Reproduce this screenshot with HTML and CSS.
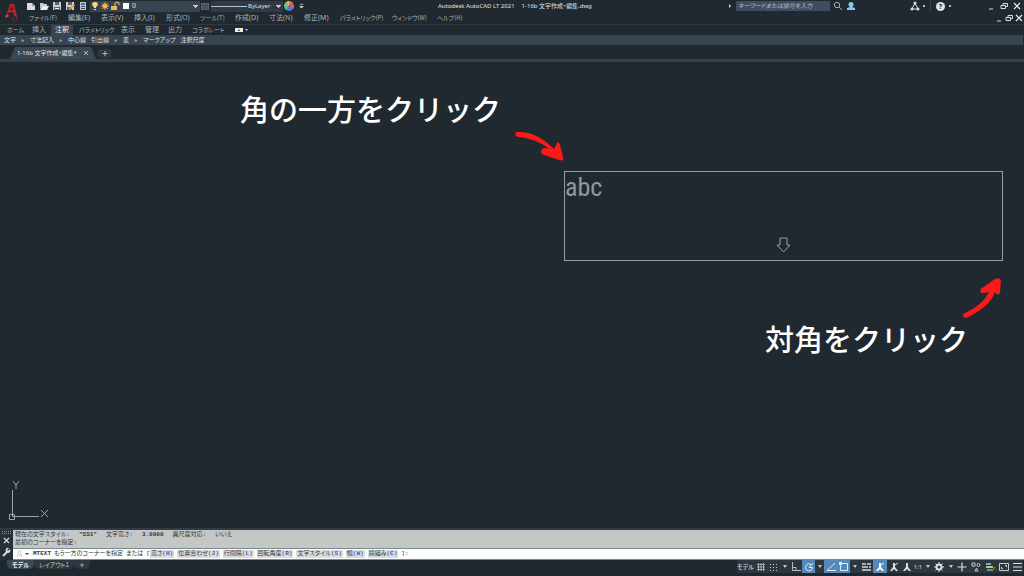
FILE: index.html
```html
<!DOCTYPE html>
<html lang="ja">
<head>
<meta charset="utf-8">
<title>Autodesk AutoCAD LT 2021</title>
<link rel="stylesheet" href="styles.css">
</head>
<body>
<div class="app">
  <header class="head">
    <button class="logo" aria-label="アプリケーション メニュー"><svg width="15" height="20" viewBox="0 0 15 20"><path d="M2 14 6 2h4l3 12h-3l-1-4-5 1-1 4z" fill="#b9222b"/><path d="M6 8 8 4l1 4z" fill="#3c1e25"/><path d="m1 14 3-2 1 2-3 2z" fill="#e03a3c"/><path d="M9 15v3h2M11 15h3M12.500 15v3" stroke="#a3212b" fill="none"/></svg></button>
    <div class="head-rows">
      <div class="titlebar">
        <div class="quick">
          <button aria-label="新規"><svg viewBox="0 0 10 10"><path d="M1 2h5l3 3v4H1z" fill="#ddd"/><path d="M6 2v3h3" fill="#999"/></svg></button>
          <button aria-label="開く"><svg viewBox="0 0 10 10"><path d="M1 8V2h3l1 1h3v2H3z" fill="#ccc"/><path d="m3 5h7L8 9H1z" fill="#eee"/></svg></button>
          <button aria-label="保存"><svg viewBox="0 0 10 10"><path d="M1 1h8v8H1z" fill="#ccc"/><path d="M3 1h4v3H3zM2 6h6v3H2z" fill="#59636b"/><path d="M3 7h4v1H3z" fill="#eee"/></svg></button>
          <button aria-label="名前を付けて保存"><svg viewBox="0 0 10 10"><path d="M1 1h8v8H1z" fill="#ccc"/><path d="M3 1h4v3H3zM2 6h5v3H2z" fill="#59636b"/><path d="m4 9 1-3 4-3 1 1-4 4z" fill="#e4a344"/></svg></button>
          <button aria-label="印刷"><svg viewBox="0 0 10 10"><path d="M2 1h6v8H2z" fill="#bcc7cf"/><path d="M3 2h4v2H3z" fill="#3e79a6"/><path d="M3 5.500h4M3 7.500h4" stroke="#47535c"/></svg></button>
        </div>
        <div class="layer">
          <svg viewBox="0 0 10 10"><path d="M5 1C1 1 2 5 4 6v1h2V6c2-1 3-5-1-5" fill="#ffdc80"/><path d="M4 8h2v1H4z" fill="#ddd"/></svg>
          <svg viewBox="0 0 10 10"><path d="M5 1v8M1 5h8M2 2l6 6M8 2l-6 6" stroke="#d69b3d"/><circle cx="5" cy="5" r="2.500" fill="#f7b64a"/></svg>
          <svg viewBox="0 0 10 10"><path d="M1 5h6v4H1z" fill="#f0b94f"/><path d="M5 5V2q2-2 4 0v2" fill="none" stroke="#f4d489"/></svg>
          <svg viewBox="0 0 10 10"><path d="M3 2h6v6H3z" fill="#fff"/></svg>
          <select aria-label="画層"><option>0</option></select>
        </div>
        <svg class="grid-icon" viewBox="0 0 10 10"><path d="M1 2h8v7H1z" fill="#68737c"/><path d="M1 4.500h8M1 7h8M3 2v7M5 2v7M7 2v7" stroke="#29343b" stroke-width=".6"/></svg>
        <div class="linetype"><span class="line"></span><select aria-label="線種"><option>ByLayer</option></select></div>
        <button class="wheel" aria-label="色"><svg viewBox="0 0 10 10"><path d="M5 5V0a5 5 0 0 1 4.500 3z" fill="#e6684f"/><path d="M5 5 9.500 3A5 5 0 0 1 8 9z" fill="#bf5bc0"/><path d="m5 5 3 4a5 5 0 0 1-5 .5z" fill="#4f7edb"/><path d="M5 5 3 9.500A5 5 0 0 1 0 5z" fill="#42bfb0"/><path d="M5 5H0a5 5 0 0 1 2-4z" fill="#8bcb55"/><path d="M5 5 2 1a5 5 0 0 1 3-1z" fill="#f4c043"/></svg></button>
        <button class="more" aria-label="カスタマイズ"><svg viewBox="0 0 6 8"><path d="M1 2h4" stroke="#ccc"/><path d="M0 4h6L3 7z" fill="#ccc"/></svg></button>
        <div class="title"><span>Autodesk AutoCAD LT 2021</span><span>1-16b 文字作成・編集.dwg</span></div>
        <div class="help">
          <svg class="s4" viewBox="0 0 4 8"><path d="m1 2 2 2-2 2z" fill="#ddd"/></svg>
          <input class="search" type="text" aria-label="検索" placeholder="キーワードまたは語句を入力">
          <button class="find" aria-label="検索する"><svg viewBox="0 0 10 10"><circle cx="4" cy="4" r="2.700" fill="none" stroke="#aaa"/><path d="m6 6 3 3" stroke="#aaa"/></svg></button>
          <button class="user" aria-label="サインイン"><svg viewBox="0 0 10 10"><circle cx="5" cy="3.500" r="2.500" fill="#88c9f0"/><path d="M4 4h2v2l3 1v2H1V7l3-1z" fill="#88c9f0"/></svg></button>
          <button class="store" aria-label="アプリ"><svg viewBox="0 0 10 10"><path d="M5 2 2 8h6z" fill="none" stroke="#ddd"/><circle cx="5" cy="2" r="1.500" fill="#ddd"/><circle cx="2" cy="8" r="1.500" fill="#ddd"/><circle cx="8" cy="8" r="1.500" fill="#ddd"/></svg><i class="dot"></i></button>
          <button class="question" aria-label="ヘルプ"><b>?</b><i class="dot"></i></button>
          <div class="win">
            <button aria-label="最小化"><svg viewBox="0 0 8 8"><path d="M2 7h4" stroke="#ddd"/></svg></button>
            <button aria-label="元に戻す"><svg viewBox="0 0 8 8"><path d="M3 3V1.500h4.500v3H6M1 3.500h4.500v3H1z" fill="none" stroke="#ddd"/></svg></button>
            <button aria-label="閉じる"><svg viewBox="0 0 8 8"><path d="m1 1 6 6M7 1 1 7" stroke="#eee" stroke-width="1.200"/></svg></button>
          </div>
        </div>
      </div>
      <nav class="menubar">
        <button class="kana">ファイル(F)</button><button>編集(E)</button><button>表示(V)</button><button>挿入(I)</button><button>形式(O)</button><button class="kana">ツール(T)</button><button>作成(D)</button><button>寸法(N)</button><button>修正(M)</button><button class="kana">パラメトリック(P)</button><button class="kana">ウィンドウ(W)</button><button class="kana">ヘルプ(H)</button>
        <div class="win small">
          <button aria-label="図面を最小化"><svg viewBox="0 0 8 8"><path d="M2 7h4" stroke="#ddd"/></svg></button>
          <button aria-label="図面を元に戻す"><svg viewBox="0 0 8 8"><path d="M3 3V1.500h4.500v3H6M1 3.500h4.500v3H1z" fill="none" stroke="#ddd"/></svg></button>
          <button aria-label="図面を閉じる"><svg viewBox="0 0 8 8"><path d="m1 1 6 6M7 1 1 7" stroke="#eee" stroke-width="1.200"/></svg></button>
        </div>
      </nav>
    </div>
  </header>
  <nav class="ribbon">
    <button class="kana">ホーム</button><button>挿入</button><button class="active">注釈</button><button class="kana">パラメトリック</button><button>表示</button><button>管理</button><button>出力</button><button class="kana">コラボレート</button><button aria-label="リボン表示"><svg width="14" height="6" viewBox="0 0 14 6"><path d="M0 1h8v4H0z" fill="#eee"/><path d="m3 4 1-2 1 2z" fill="#333"/><path d="M10 2h3l-1.500 2z" fill="#ccc"/></svg></button>
  </nav>
  <div class="panels">
    <button>文字</button><i>»</i><button>寸法記入</button><i>»</i><button>中心線</button><button>引出線</button><i>»</i><button>表</button><i>»</i><button class="kana">マークアップ</button><button>注釈尺度</button>
  </div>
  <div class="files">
    <div class="file"><span>1-16b 文字作成・編集*</span><button aria-label="タブを閉じる"><svg viewBox="0 0 8 8"><path d="m2 2 4 4M6 2 2 6" stroke="#aeb5bb"/></svg></button></div>
    <button class="add" aria-label="新しいタブ"><svg viewBox="0 0 8 8"><path d="M4 2v5M1.500 4.500h5" stroke="#aeb5bb"/></svg></button>
  </div>
  <main class="canvas">
    <p class="note first">角の一方をクリック</p>
    <svg class="arrow-a" width="50" height="32" viewBox="0 0 50 32"><path d="M1 1C17 0 28 7 39 18L42 12Q44 10 45 14L48 26Q49 31 44 29L29 24C24 22 26 17 30 17L34 18C26 11 15 7 3 6Q-1 5 1 1z" fill="#fd1919"/></svg>
    <div class="box"><span class="sample">abc</span><svg width="16" height="16" viewBox="0 0 16 16"><path d="M5 1h7v7h3l-6.500 7L2 8h3z" fill="none" stroke="#9ba1a4"/></svg></div>
    <svg class="arrow-b" width="40" height="42" viewBox="0 0 40 42"><path d="M1 37C14 31 22 25 27 15L22 16C18 17 17 13 20 11L33 2Q38 0 39 4L38 15Q37 20 33 15C29 27 17 35 4 41Q0 40 1 37z" fill="#fd1919"/></svg>
    <p class="note second">対角をクリック</p>
    <svg class="ucs" width="44" height="44" viewBox="0 0 44 44"><g fill="none" stroke="#a0a6a8"><path d="M4.500 10v27M4 36.500h27M1.500 34.500h5v5h-5zM5 1l3 4 3-4M8 5v4M33 30l7 7M40 30l-7 7"/></g></svg>
  </main>
  <section class="command">
    <div class="grip"><svg width="10" height="28" viewBox="0 0 10 28"><path d="M1 1.500h9M1 3.500h9" stroke="#8c959c" stroke-dasharray="1 1"/><path d="m3 8 5 5M8 8l-5 5" stroke="#ddd" stroke-width="1.200"/><path d="m2 26 5-5" stroke="#ddd" stroke-width="2"/><path d="M9 19 7 21 6 20l2-2C5 17 4 20 5 22l2 1c2 0 3-2 2-4z" fill="#ddd"/></svg></div>
    <div class="lines">
      <div class="history"><p><span>現在の文字スタイル:</span><b>"SS1"</b><span>文字高さ:</span><b>3.0000</b><span>異尺度対応:</span><span>いいえ</span></p><p>最初のコーナーを指定:</p></div>
      <div class="prompt"><svg width="14" height="8" viewBox="0 0 14 8"><path d="m1 7 2-6h1l2 6M2 5h3" stroke="#ccd0d1" fill="none"/><path d="M9 3h4l-2 2z" fill="#444"/></svg><b>MTEXT</b><span>もう一方のコーナーを指定</span><span>または</span><span class="opts"><span>[</span><button>高さ(<em>H</em>)</button><button>位置合わせ(<em>J</em>)</button><button>行間隔(<em>L</em>)</button><button>回転角度(<em>R</em>)</button><button>文字スタイル(<em>S</em>)</button><button>幅(<em>W</em>)</button><button>段組み(<em>C</em>)</button><span>]:</span></span></div>
    </div>
  </section>
  <footer class="bottom">
    <div class="layouts"><button class="active kana">モデル</button><button class="kana">レイアウト1</button><button aria-label="レイアウトを追加"><svg viewBox="0 0 8 8"><path d="M4 1v6M1 4h6" stroke="#b5bbc0"/></svg></button></div>
    <div class="status">
      <button class="kana model">モデル</button>
      <button class="w14" aria-label="グリッド"><svg viewBox="0 0 10 10"><path d="M1 2.500h8M1 5h8M1 7.500h8M2.500 1v8M5 1v8M7.500 1v8" stroke="#b5bdc2" stroke-width=".8"/></svg></button>
      <button class="w12" aria-label="スナップ"><svg viewBox="0 0 10 10"><path d="M1 2.500h9M1 5.500h9M1 8.500h9" stroke="#c5cdd2" stroke-dasharray="1 2"/></svg></button>
      <button class="w9 caret" aria-label="スナップ設定"></button>
      <button class="w13" aria-label="直交"><svg viewBox="0 0 10 10"><path d="M1.500 0v8.500H10M2 5.500h3V8" fill="none" stroke="#b5bdc2"/></svg></button>
      <button class="w13 on" aria-label="極トラッキング"><svg viewBox="0 0 10 10"><path d="M7 2.500a3.500 3.500 0 1 0 1.500 3H5L9 1" fill="none" stroke="#e0edf6"/></svg></button>
      <button class="w9 caret" aria-label="極設定"></button>
      <button class="w13 on" aria-label="オブジェクト スナップ トラッキング"><svg viewBox="0 0 10 10"><path d="m9 1-8 7.500h9" fill="none" stroke="#e0edf6"/></svg></button>
      <button class="w13 on" aria-label="オブジェクト スナップ"><svg viewBox="0 0 10 10"><path d="M1.500 1.500h7v7h-7z" fill="none" stroke="#e0edf6"/><path d="M0 0h3v3H0z" fill="#e0edf6"/></svg></button>
      <button class="w9 caret" aria-label="スナップ点設定"></button>
      <button class="w14" aria-label="線の太さ"><svg viewBox="0 0 10 10"><path d="M1 2h4M6 2h4M1 5h6M1 8h9M8 5h2" stroke="#d6dadd" stroke-width="1.500"/></svg></button>
      <button class="w14 on" aria-label="注釈オブジェクト"><svg viewBox="0 0 10 10"><path d="M4 1h2v4l3 4H7L5 7 3 9H1l3-4z" fill="#fff"/><path d="m6 3 3-2" stroke="#fff"/></svg></button>
      <button class="w13" aria-label="尺度を追加"><svg viewBox="0 0 10 10"><path d="M4 1h2v4l3 4H7L5 7 3 9H1l3-4z" fill="#ddd"/><path d="m6 3 3-2" stroke="#ddd"/></svg></button>
      <button class="w13" aria-label="注釈尺度設定"><svg viewBox="0 0 10 10"><path d="M4 1h2v4l3 4H7L5 7 3 9H1l3-4z" fill="#ddd"/></svg></button>
      <button class="scale">1:1</button>
      <button class="w9 caret" aria-label="尺度一覧"></button>
      <button class="w14" aria-label="ワークスペース"><svg viewBox="0 0 10 10"><circle cx="5" cy="5" r="2.500" fill="none" stroke="#ddd" stroke-width="2"/><path d="M5 0v2M5 8v2M0 5h2M8 5h2M1.500 1.500l1.500 1.500M7 7l1.500 1.500M8.500 1.500 7 3M3 7 1.500 8.500" stroke="#ddd"/></svg></button>
      <button class="w9 caret" aria-label="ワークスペース一覧"></button>
      <button class="w14" aria-label="注釈モニター"><svg viewBox="0 0 10 10"><path d="M5 .5v9M.5 5h9" stroke="#ddd" stroke-width="1.200"/></svg></button>
      <button class="w14" aria-label="オブジェクト選択表示"><svg viewBox="0 0 10 10"><path d="M1 1h3v3H1zM4 9l1.500-3L7 9z" fill="none" stroke="#c4cacd"/><circle cx="7.500" cy="3" r="1.500" fill="none" stroke="#c4cacd"/></svg></button>
      <button class="w14" aria-label="ハードウェア"><svg viewBox="0 0 10 10"><path d="M1 1h5v2H1z" fill="#70b0df"/><path d="M1 4h7v2H1z" fill="#e2ba61"/><path d="M2 7h4v2H2z" fill="#4e8fd0"/><path d="m6 7 1 2 3-4" stroke="#79b857" fill="none"/></svg></button>
      <button class="w13" aria-label="全画面"><svg viewBox="0 0 10 10"><path d="M.5 1.500h9v7h-9z" fill="none" stroke="#ccc"/><path d="M6 3.500h1.500V5M2.500 5v1.500H4" fill="none" stroke="#ccc"/></svg></button>
      <button class="w13" aria-label="カスタマイズ"><svg viewBox="0 0 10 10"><path d="M1 1.500h9M1 5h9M1 8.500h9" stroke="#ddd" stroke-width="1.200"/></svg></button>
    </div>
  </footer>
</div>
</body>
</html>
```
FILE: styles.css
```css
* { box-sizing: border-box; }
body { margin: 0; background: #20292f; }
.app {
  display: flex; flex-direction: column; min-height: 100vh; overflow: hidden;
  font-family: "Noto Sans", "Noto Sans CJK JP", sans-serif;
  font-size: 7px; line-height: 10px; color: #c5cbd0;
  font-feature-settings: "palt"; white-space: nowrap;
}
button, input, select { font: inherit; font-feature-settings: inherit; color: inherit; background: none; border: 0; padding: 0; margin: 0; }
button { white-space: nowrap; text-align: left; }
p { margin: 0; }
svg { display: block; flex: none; }
.kana { font-family: "Noto Sans CJK JP", sans-serif; font-size: 6px; }

.head { display: flex; border-bottom: 1px solid #2e3942; }
.logo { width: 26px; padding-left: 4px; align-self: center; }
.head-rows { flex: 1; min-width: 0; }
.titlebar { display: flex; align-items: center; height: 12px; font-size: 6px; }
.titlebar svg { width: 10px; height: 10px; }
.quick { display: flex; gap: 3px; width: 64px; }
.layer { display: flex; align-items: center; width: 110px; height: 11px; background: #384451; font-size: 7px; }
.layer select { flex: 1; min-width: 0; margin-left: 2px; }
select { appearance: none; padding: 0 10px 0 0; color: #dde1e4; background: conic-gradient(from 315deg at 50% 100%, #ccc 90deg, transparent 0) right 2px center / 5px 3px no-repeat; }
.grid-icon { margin: 0 1px 0 0; }
.linetype { display: flex; align-items: center; width: 72px; height: 11px; background: #2f3a46; }
.line { flex: 1; height: 1px; background: #bbc0c4; }
.linetype select { width: 35px; margin-left: 1px; }
.wheel { margin-left: 1px; }
.titlebar .more svg { width: 5px; height: 8px; margin-left: 5px; }
.title { display: flex; gap: 7px; margin-left: 134px; color: #e1e4e6; }
.help { display: flex; align-items: center; margin-left: auto; }
.titlebar .s4 { width: 4px; margin-right: 4px; }
.search { width: 94px; height: 10px; background: #414c60; font-size: 6px; font-style: italic; padding: 0 2px; }
.search::placeholder { color: #bbc1ca; opacity: 1; }
.find { margin-left: 3px; }
.user { margin-left: 3px; }
.store { display: flex; align-items: center; gap: 3px; margin-left: 54px; padding-right: 5px; border-right: 1px solid #37424a; }
.question { display: flex; align-items: center; gap: 4px; margin-left: 5px; }
.question b { width: 9px; height: 9px; font-size: 7px; line-height: 9px; border-radius: 50%; background: #e1e3e4; color: #20292f; text-align: center; }
.dot { width: 2px; height: 2px; background: #bbb; }
.win { display: flex; gap: 5px; margin: 0 3px 0 36px; }
.win svg, .titlebar .win svg { width: 8px; height: 8px; }
.menubar { display: grid; grid-template-columns: 39px 33px 33px 32px 34px 35px 34px 35px 36px 52px 45px 30px 1fr; height: 12px; align-items: center; padding-left: 3px; color: #aab1b6; }
.small { gap: 2px; margin: 0 1px 0 0; justify-content: flex-end; }

.ribbon { display: grid; grid-template-columns: 25px 24px 23px 42px 24px 23px 24px 43px 1fr; height: 10px; padding-left: 7px; align-items: stretch; color: #aab1b6; }
.ribbon .active { background: #384451; color: #eef0f2; margin-left: -5px; width: 22px; text-align: center; }
.panels { display: flex; align-items: center; gap: 5px; height: 10px; padding-left: 4px; margin-right: 1px; background: #384451; color: #dde0e3; font-size: 6px; }
.panels i { font-style: normal; width: 4px; }
.files { display: flex; height: 17px; padding: 2px 0 0 10px; border-bottom: 3px solid #35414b; align-items: center; }
.file { display: flex; align-items: center; justify-content: space-between; width: 86px; height: 12px; padding: 0 6px 0 7px; background: #3b4754; color: #e5e7e9; font-size: 6px; clip-path: polygon(5px 0, 81px 0, 100% 100%, 0 100%); }
.file svg, .add svg { width: 8px; height: 8px; }
.add { height: 9px; width: 13px; margin-left: 2px; padding-left: 3px; background: #2c3740; border-radius: 3px; }

.canvas { position: relative; flex: 1; min-height: 460px; background: #1f292f; }
.note { position: absolute; font-family: "Noto Sans CJK JP", sans-serif; font-feature-settings: normal; font-size: 29px; line-height: 40px; font-weight: 500; color: #fff; }
.first { left: 240px; top: 26px; }
.second { left: 765px; top: 256px; }
.arrow-a { position: absolute; left: 515px; top: 69px; }
.arrow-b { position: absolute; left: 962px; top: 215px; }
.box { position: absolute; left: 564px; top: 109px; width: 439px; height: 90px; border: 1px solid #979d9f; }
.sample { position: absolute; left: 0; top: -1px; font: 26px/32px "Roboto Condensed", "Open Sans Condensed", "DejaVu Sans Condensed", Roboto, sans-serif; color: #92999c; }
.box svg { position: absolute; left: 210px; bottom: 7px; }
.ucs { position: absolute; left: 8px; top: 418px; }

.command { display: flex; background: #25303a; border-top: 2px solid #2e3b47; color: #30363a; font-family: "Liberation Mono", "Noto Sans CJK JP", monospace; font-size: 6px; line-height: 8px; }
.grip { width: 13px; padding-left: 1px; }
.lines { flex: 1; min-width: 0; }
.history { height: 18px; padding: 1px 2px; background: #c3c7c6; }
.history p { display: flex; gap: 9px; }
.prompt { display: flex; align-items: center; gap: 3px; height: 12px; padding-left: 3px; background: #fbfdfc; border: 1px solid #7b8a8b; border-width: 1px 0; }
.opts { display: flex; align-items: center; gap: 3px; }
.opts > span { margin-right: -3px; }
.opts button { background: #dadddd; padding: 0 1px; }
em { font-style: normal; color: #4848e0; font-weight: bold; }
.bottom { display: flex; justify-content: space-between; height: 16px; background: #1e282e; }
.layouts { display: flex; height: 9px; padding-left: 7px; line-height: 9px; }
.layouts button { background: #2c3740; padding: 0 5px; border-radius: 0 0 5px 5px; }
.layouts .active { background: #3b4754; color: #f1f2f3; font-weight: 600; }
.layouts svg { width: 6px; height: 6px; }
.status { display: flex; height: 13px; margin: 0 1px 0 0; background: #2c3740; color: #dadde0; }
.status button { display: flex; align-items: center; justify-content: center; }
.status svg { width: 10px; height: 10px; }
.model { width: 17px; font-weight: 500; }
.w9 { width: 9px; }
.w12 { width: 12px; }
.w13 { width: 13px; }
.w14 { width: 14px; }
.status .scale { width: 10px; font-size: 6px; }
.on { background: #5489b9; }
.caret::before { content: ""; border: 2px solid transparent; border-top: 3px solid #c3c9cd; border-bottom: 0; }
```
